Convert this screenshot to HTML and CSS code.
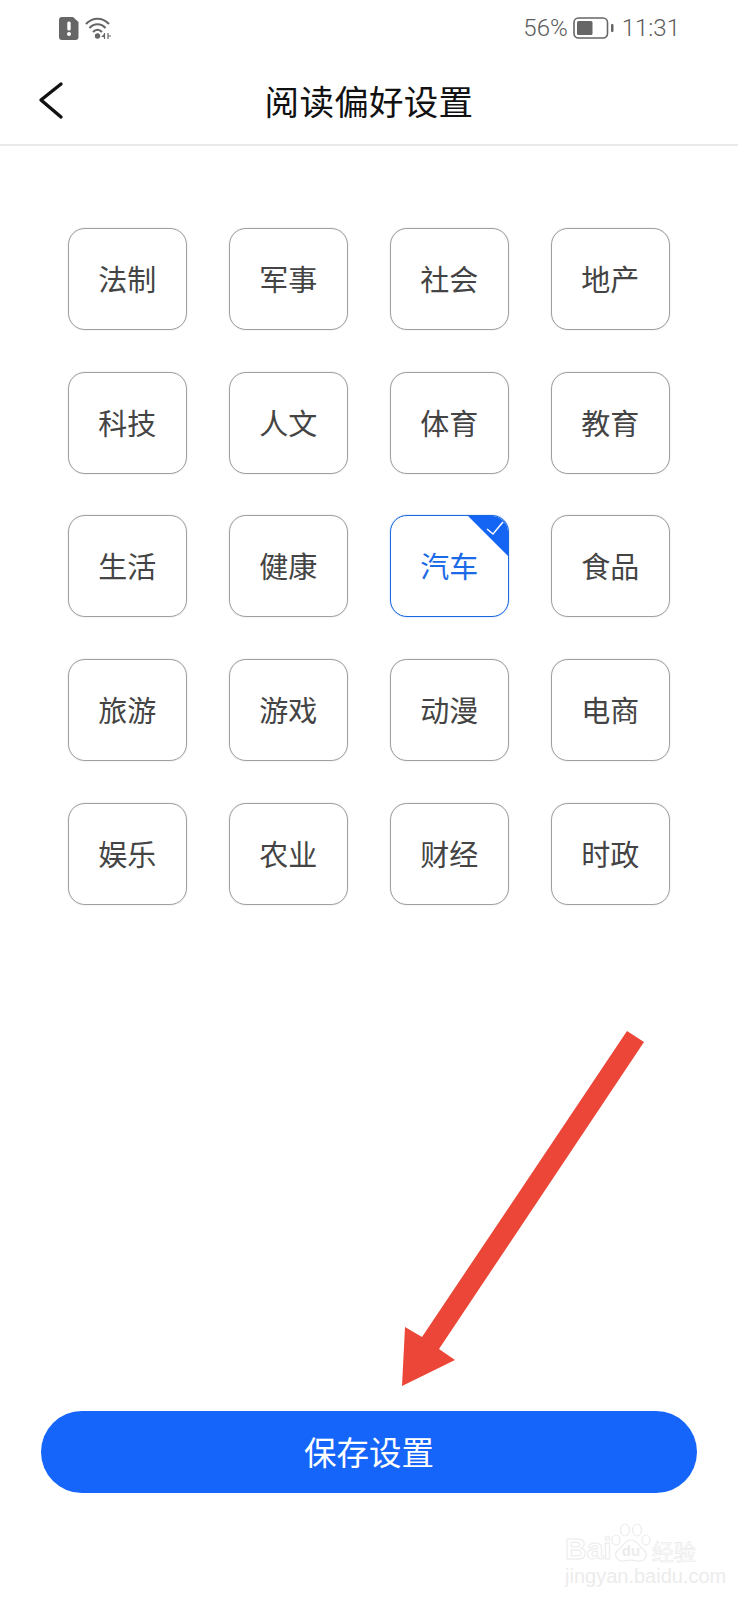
FILE: index.html
```html
<!doctype html>
<html>
<head>
    <meta charset="utf-8">
    <title>阅读偏好设置</title>
    <link rel="stylesheet" href="styles.css">
</head>
<body>
<div class="page">
    <div class="status">
        <svg class="ic-alert" width="20" height="23" viewBox="0 0 20 23">
            <path d="M3 0H14L19.500 5V20A3 3 0 0 1 16.500 23H3A3 3 0 0 1 0 20V3A3 3 0 0 1 3 0Z" fill="#666"/>
            <rect x="8.300" y="4.500" width="3.400" height="9" rx="1.500" fill="#fff"/>
            <circle cx="10" cy="17" r="2" fill="#fff"/>
        </svg>
        <svg class="ic-wifi" width="27" height="22" viewBox="0 0 27 22">
            <path d="M1 7C7.500 0 17.500 0 24 7M4.500 11C9 6 16 6 20.500 11M8 15C10.800 12 14.200 12 17 15" fill="none" stroke="#666" stroke-width="2.200"/>
            <circle cx="12.500" cy="19" r="2.700" fill="#666"/>
            <path d="M19.500 17.500L17.500 19.500H19.500M19.500 16V22M23 16V22M23 19H26" fill="none" stroke="#666" stroke-width="1.200"/>
        </svg>
        <span class="spacer"></span>
        <span class="pct">56%</span>
        <svg class="ic-batt" width="41" height="22" viewBox="0 0 41 22">
            <rect x="1" y="1" width="33.500" height="20" rx="4.500" fill="none" stroke="#666" stroke-width="1.600"/>
            <rect x="4" y="4" width="15.500" height="14" rx="1.500" fill="#666"/>
            <rect x="38" y="7" width="2.500" height="8" rx="1" fill="#666"/>
        </svg>
        <span class="time">11:31</span>
    </div>

    <div class="header">
        <svg class="back" width="26" height="40" viewBox="0 0 26 40">
            <path d="M23 4L3 20L23 37" fill="none" stroke="#111" stroke-width="3.400" stroke-linecap="round" stroke-linejoin="round"/>
        </svg>
        <h1>阅读偏好设置</h1>
    </div>

    <div class="tags">
        <div class="tag">法制</div>
        <div class="tag">军事</div>
        <div class="tag">社会</div>
        <div class="tag">地产</div>
        <div class="tag">科技</div>
        <div class="tag">人文</div>
        <div class="tag">体育</div>
        <div class="tag">教育</div>
        <div class="tag">生活</div>
        <div class="tag">健康</div>
        <div class="tag selected">汽车
            <svg class="corner" width="42" height="42" viewBox="0 0 42 42">
                <path d="M0 0H42V42Z" fill="#1565f5"/>
                <path d="M20 14L26 19L36 7" fill="none" stroke="#fff" stroke-width="1.500"/>
            </svg>
        </div>
        <div class="tag">食品</div>
        <div class="tag">旅游</div>
        <div class="tag">游戏</div>
        <div class="tag">动漫</div>
        <div class="tag">电商</div>
        <div class="tag">娱乐</div>
        <div class="tag">农业</div>
        <div class="tag">财经</div>
        <div class="tag">时政</div>
    </div>

    <button class="save">保存设置</button>

    <svg class="arrow" width="738" height="1600" viewBox="0 0 738 1600">
        <path d="M627 1031L644 1042L439 1349L455 1360L402 1386L405 1327L422 1337Z" fill="#eb4637"/>
    </svg>

    <div class="mark">
        <div class="mark-row">
            <span class="mark-bai">Bai</span>
            <svg class="mark-paw" width="40" height="42" viewBox="0 0 40 42">
                <g fill="none" stroke="#ececec" stroke-width="1.200">
                    <ellipse cx="5" cy="18" rx="4" ry="5"/>
                    <ellipse cx="14" cy="8" rx="4.500" ry="6"/>
                    <ellipse cx="26" cy="8" rx="4.500" ry="6"/>
                    <ellipse cx="35" cy="18" rx="4" ry="5"/>
                    <path d="M20 18C13 18 13 24 7 28C2 33 6 40 13 39C17 38 23 38 27 39C34 40 38 33 33 28C27 24 27 18 20 18Z"/>
                </g>
                <text x="20" y="34" text-anchor="middle" class="mark-du">du</text>
            </svg>
            <span class="mark-cn">经验</span>
        </div>
        <div class="mark-url">jingyan.baidu.com</div>
    </div>
</div>
</body>
</html>
```

FILE: styles.css
```css
html { font-family: "Noto Sans CJK SC", sans-serif; }
body { margin: 0; background: #fff; }
svg { display: block; }

.page { position: relative; width: 738px; height: 1600px; overflow: hidden; background: #fff; }

.status {
    display: flex; align-items: center;
    height: 56px; padding: 0 58px 0 59px;
    color: #5c5c5c; font-family: Roboto, sans-serif; font-size: 24px; font-weight: 300;
}
.ic-wifi { margin-left: 6px; }
.spacer { flex: 1; }
.ic-batt { margin-left: 5px; margin-right: 8px; }

.header {
    position: relative;
    display: flex; align-items: center; justify-content: center;
    height: 88px;
    border-bottom: 2px solid #e9e9e9;
}
.back { position: absolute; left: 38px; top: 24px; }
h1 { margin: 0; font-size: 34.500px; font-weight: 400; color: #111; letter-spacing: 0.3px; }

.tags {
    display: grid;
    grid-template-columns: repeat(4, 119.500px);
    grid-auto-rows: 102px;
    column-gap: 41.500px; row-gap: 41.700px;
    padding: 82px 0 0 67.500px;
}
.tag {
    position: relative; overflow: hidden;
    display: flex; align-items: center; justify-content: center;
    box-sizing: border-box;
    padding-bottom: 2px;
    border: 1px solid #a0a0a0; border-radius: 17px;
    box-shadow: 0 0 1px #a0a0a0;
    font-size: 29px; color: #444;
}
.tag.selected { border-color: #1a68e0; box-shadow: 0 0 1px #1a68e0; color: #1a6ae8; }
.corner { position: absolute; top: -1px; right: -1px; }

.save {
    display: block;
    width: 656px; height: 82px;
    margin: 506px 0 0 41px; padding: 0 0 2px;
    border: none; border-radius: 41px;
    background: #1565fa; color: #fff;
    font-family: inherit; font-size: 32.500px;
}

.arrow { position: absolute; left: 0; top: 0; pointer-events: none; }

.mark { position: absolute; left: 565px; top: 1520px; width: 136px; }
.mark-row { display: flex; align-items: flex-end; height: 44px; }
.mark-bai {
    font-family: "Liberation Sans", sans-serif; font-size: 30px; font-weight: 700; line-height: 30px;
    color: #fff; -webkit-text-stroke: 1px #ececec;
}
.mark-paw { margin-left: -1px; }
.mark-du { font-family: "Liberation Sans", sans-serif; font-size: 15px; font-weight: 700; fill: #ececec; }
.mark-cn {
    font-size: 22px; line-height: 28px; margin-left: 1px; white-space: nowrap;
    color: #fff; -webkit-text-stroke: 0.6px #e8e8e8;
}
.mark-url {
    margin-top: 2px;
    font-family: "Liberation Sans", sans-serif; font-size: 20px; line-height: 20px; white-space: nowrap;
    color: #ececec;
}
```
